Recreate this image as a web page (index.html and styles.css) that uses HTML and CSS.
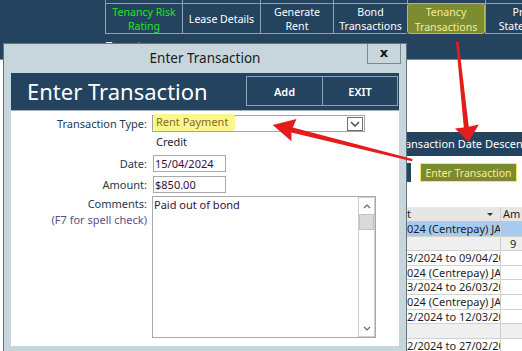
FILE: index.html
```html
<!DOCTYPE html>
<html lang="en">
<head>
<meta charset="utf-8">
<title>Enter Transaction</title>
<link rel="stylesheet" href="styles.css">
</head>
<body>
<header class="topband">
  <div class="navgrid navtop">
    <div class="cell blank"></div>
    <div class="cell"></div>
    <div class="cell"></div>
    <div class="cell"></div>
    <div class="cell"></div>
    <div class="cell"></div>
    <div class="cell"></div>
  </div>
  <nav class="navgrid navmain">
    <div class="cell blank"></div>
    <div class="cell green">Tenancy Risk<br>Rating</div>
    <div class="cell">Lease Details</div>
    <div class="cell">Generate<br>Rent</div>
    <div class="cell">Bond<br>Transactions</div>
    <div class="cell active">Tenancy<br>Transactions</div>
    <div class="cell">Print<br>Statement</div>
  </nav>
  <div class="subline">Tenant</div>
</header>

<main class="main">
  <div class="leftcol"></div>
  <section class="rightcol">
    <div class="sortbar">Transaction Date Descending</div>
    <div class="btnrow">
      <span class="navybtn"></span>
      <span class="enterbtn">Enter Transaction</span>
    </div>
    <div class="table">
      <div class="tr th"><div class="c1">t<span class="sorttri"></span></div><div class="c2">Am</div></div>
      <div class="tr sel"><div class="c1">024 (Centrepay) JA</div><div class="c2"></div></div>
      <div class="tr grey"><div class="c1"></div><div class="c2 amt">9</div></div>
      <div class="tr"><div class="c1">3/2024 to 09/04/2024</div><div class="c2"></div></div>
      <div class="tr"><div class="c1">024 (Centrepay) JA</div><div class="c2"></div></div>
      <div class="tr"><div class="c1">3/2024 to 26/03/2024</div><div class="c2"></div></div>
      <div class="tr"><div class="c1">024 (Centrepay) JA</div><div class="c2"></div></div>
      <div class="tr"><div class="c1">2/2024 to 12/03/2024</div><div class="c2"></div></div>
      <div class="tr grey"><div class="c1"></div><div class="c2"></div></div>
      <div class="tr"><div class="c1">2/2024 to 27/02/2024</div><div class="c2"></div></div>
    </div>
  </section>
</main>

<div class="dialog">
  <div class="titlebar">
    <h1 class="dlg-title">Enter Transaction</h1>
    <div class="close">x</div>
  </div>
  <div class="client">
    <div class="dlg-head">
      <h2 class="head-title">Enter Transaction</h2>
      <div class="head-btns">
        <span class="hbtn">Add</span>
        <span class="hbtn exit">EXIT</span>
      </div>
    </div>
    <div class="frow r-type">
      <label class="lbl">Transaction Type:</label>
      <div class="combo">
        <span class="hl">Rent Payment</span>
        <span class="ddbtn"><svg width="10" height="6" viewBox="0 0 10 6"><polyline points="1,1 5,5 9,1" fill="none" stroke="#555" stroke-width="1.6"/></svg></span>
      </div>
    </div>
    <div class="frow r-credit">
      <span></span>
      <span class="credit">Credit</span>
    </div>
    <div class="frow r-date">
      <label class="lbl">Date:</label>
      <div class="inp">15/04/2024</div>
    </div>
    <div class="frow r-amt">
      <label class="lbl">Amount:</label>
      <div class="inp">$850.00</div>
    </div>
    <div class="frow r-com">
      <div class="lbl lblstack"><span>Comments:</span><span class="hint">(F7 for spell check)</span></div>
      <div class="memo">
        <div class="memotext">Paid out of bond</div>
        <div class="sb">
          <div class="sbbtn up"><svg width="8" height="5" viewBox="0 0 8 5"><polyline points="1,4 4,1 7,4" fill="none" stroke="#666" stroke-width="1.2"/></svg></div>
          <div class="thumb"></div>
          <div class="track"></div>
          <div class="sbbtn down"><svg width="8" height="5" viewBox="0 0 8 5"><polyline points="1,1 4,4 7,1" fill="none" stroke="#666" stroke-width="1.2"/></svg></div>
        </div>
      </div>
    </div>
  </div>
</div>

<svg class="arrows" width="522" height="351" viewBox="0 0 522 351">
  <polygon points="456,42 458.6,42 468.8,126.8 478.8,124.4 468.6,142 455,128.6 463.8,127.4" fill="#e31c1c"/>
  <polygon points="272.7,125 296.5,119 292.8,127.6 412.5,158.9 412,161.3 291.4,132.6 291.5,141.2" fill="#e31c1c"/>
</svg>
</body>
</html>
```

FILE: styles.css
```css
html, body {
  margin: 0;
  padding: 0;
}
body {
  width: 522px;
  height: 351px;
  overflow: hidden;
  position: relative;
  background: #ffffff;
  font-family: "Noto Sans", "Open Sans", sans-serif;
  color: #222;
}

/* ---------- top band ---------- */
.topband {
  background: #24435f;
  height: 59px;
  border-bottom: 1px solid #7d8c9a;
  overflow: hidden;
}
.navgrid {
  display: grid;
  grid-template-columns: 105px 77px 78px 73px 74px 78px 78px;
}
.navgrid .cell {
  box-sizing: border-box;
  border-left: 1px solid #8aa1b6;
  border-bottom: 1px solid #8aa1b6;
}
.navgrid .cell.blank {
  border: none;
}
.navtop .cell {
  height: 4px;
}
.navmain .cell {
  height: 30px;
  display: flex;
  align-items: center;
  justify-content: center;
  text-align: center;
  color: #ffffff;
  font-size: 10.6px;
  line-height: 14.5px;
  padding-top: 1px;
  white-space: nowrap;
}
.navmain .cell.green {
  color: #22e322;
}
.navmain .cell.active {
  background: #7d8c31;
  border: 1px solid #b2be56;
  border-radius: 3px;
  height: 31px;
  margin-top: -1px;
  padding-top: 2px;
  color: #f2ef9c;
}
.subline {
  color: #fff;
  font-size: 11px;
  line-height: 13px;
  padding-left: 106px;
  margin-top: 5px;
}

/* ---------- page behind ---------- */
.main {
  display: flex;
}
.leftcol {
  width: 380px;
  flex: none;
}
.rightcol {
  flex: 1;
  min-width: 0;
}
.sortbar {
  margin-top: 72px;
  height: 24px;
  line-height: 24px;
  background: #24435f;
  color: #ffffff;
  font-size: 11px;
  padding-left: 15px;
  white-space: nowrap;
  overflow: hidden;
}
.btnrow {
  margin-top: 7px;
  height: 19px;
  display: flex;
  gap: 9px;
}
.navybtn {
  width: 31px;
  background: #24435f;
}
.enterbtn {
  box-sizing: border-box;
  width: 97px;
  height: 19px;
  background: #7c8b30;
  border: 1px solid #ecec5e;
  color: #f4f290;
  font-size: 10.5px;
  display: flex;
  align-items: center;
  justify-content: center;
  white-space: nowrap;
}
.table {
  margin-top: 25px;
  margin-left: 26px;
  font-size: 11px;
  color: #1e1e1e;
}
.tr {
  display: grid;
  grid-template-columns: 95px 1fr;
  height: 14.6px;
  box-sizing: border-box;
  border-bottom: 1px solid #d2d2d2;
}
.tr .c1, .tr .c2 {
  white-space: nowrap;
  overflow: hidden;
  line-height: 13.6px;
}
.tr .c1 {
  border-right: 1px solid #cfcfcf;
  padding-left: 1px;
}
.tr .c2 {
  padding-left: 2px;
}
.tr.th {
  height: 15px;
  background: #e6e6e6;
  border-bottom: 1px solid #c4c4c4;
}
.tr.th .c1 {
  display: flex;
  justify-content: space-between;
  align-items: center;
  padding-right: 7px;
  line-height: 14px;
}
.sorttri {
  width: 0;
  height: 0;
  border-left: 3px solid transparent;
  border-right: 3px solid transparent;
  border-top: 3px solid #333;
}
.tr.sel {
  background: #a7cbef;
}
.tr.grey {
  background: #efefef;
}
.c2.amt {
  padding-left: 9px;
}

/* ---------- dialog ---------- */
.dialog {
  position: absolute;
  left: 3px;
  top: 43px;
  width: 404px;
  height: 320px;
  box-sizing: border-box;
  border: 1px solid #66737e;
  background: #c6d6dc;
  display: flex;
  flex-direction: column;
}
.titlebar {
  height: 29px;
  display: grid;
  grid-template-columns: 1fr auto 1fr;
  align-items: start;
}
.dlg-title {
  grid-column: 2;
  margin: 0;
  font-size: 13.5px;
  font-weight: normal;
  color: #1a1a1a;
  line-height: 29px;
  white-space: nowrap;
}
.close {
  grid-column: 3;
  justify-self: end;
  box-sizing: border-box;
  width: 34px;
  height: 20px;
  margin-right: 5px;
  border: 1px solid #7a8993;
  border-top: none;
  font-family: "DejaVu Sans", sans-serif;
  font-weight: bold;
  font-size: 13px;
  color: #111;
  display: flex;
  align-items: center;
  justify-content: center;
  padding-bottom: 2px;
}
.client {
  margin: 0 7px;
  background: #ffffff;
  height: 273px;
  display: flex;
  flex-direction: column;
}
.dlg-head {
  height: 38px;
  box-sizing: border-box;
  background: #24435f;
  border-bottom: 1px solid #a3b2bd;
  display: flex;
  justify-content: space-between;
  align-items: flex-start;
}
.head-title {
  margin: 0;
  padding-left: 16px;
  font-size: 22px;
  font-weight: normal;
  color: #ffffff;
  line-height: 37px;
  white-space: nowrap;
}
.head-btns {
  display: flex;
  margin-top: 3px;
  margin-right: 1px;
}
.hbtn {
  box-sizing: border-box;
  width: 77px;
  height: 30px;
  border: 1px solid #8aa1b6;
  color: #ffffff;
  font-size: 11px;
  font-weight: 600;
  display: flex;
  align-items: center;
  justify-content: center;
}
.hbtn.exit {
  width: 75px;
  border-left: none;
}

/* form rows */
.frow {
  display: grid;
  grid-template-columns: 136px auto;
  column-gap: 5px;
  align-items: center;
  justify-content: start;
}
.lbl {
  text-align: right;
  font-size: 11px;
  color: #213a55;
  white-space: nowrap;
}
.r-type {
  margin-top: 4px;
  height: 17px;
}
.combo {
  box-sizing: border-box;
  width: 213px;
  height: 17px;
  border: 1px solid #a3a3a3;
  display: flex;
  align-items: center;
  justify-content: space-between;
}
.hl {
  position: relative;
  margin-left: 0;
  margin-top: -3px;
  height: 17px;
  width: 82px;
  box-sizing: border-box;
  padding-left: 3px;
  background: #fbf78a;
  border-radius: 4px;
  color: #86692a;
  font-size: 11px;
  line-height: 16px;
  white-space: nowrap;
}
.ddbtn {
  box-sizing: border-box;
  width: 16px;
  height: 14px;
  margin-right: 1px;
  border: 1px solid #6f6f6f;
  display: flex;
  align-items: center;
  justify-content: center;
}
.r-credit {
  height: 18px;
}
.credit {
  padding-left: 4px;
  font-size: 11px;
  color: #1c2538;
}
.r-date {
  margin-top: 5px;
}
.r-amt {
  margin-top: 4px;
}
.inp {
  box-sizing: border-box;
  width: 73px;
  height: 17px;
  margin-left: 1px;
  border: 1px solid #a9a9a9;
  padding-left: 1px;
  font-size: 11px;
  line-height: 15px;
  color: #35103e;
  white-space: nowrap;
}
.r-com {
  margin-top: 3px;
  align-items: start;
}
.lblstack {
  display: flex;
  flex-direction: column;
  align-items: flex-end;
  line-height: 15.5px;
}
.hint {
  color: #5b5080;
}
.memo {
  box-sizing: border-box;
  width: 224px;
  height: 142px;
  border: 1px solid #a9a9a9;
  display: flex;
}
.memotext {
  flex: 1;
  padding-left: 1px;
  font-size: 11px;
  line-height: 15px;
  color: #35103e;
}
.sb {
  width: 17px;
  box-sizing: border-box;
  border: 1px solid #cfcfcf;
  display: flex;
  flex-direction: column;
}
.sbbtn {
  height: 16px;
  flex: none;
  display: flex;
  align-items: center;
  justify-content: center;
}
.thumb {
  height: 16px;
  flex: none;
  box-sizing: border-box;
  background: #dadada;
  border: 1px solid #c2c2c2;
}
.track {
  flex: 1;
}

/* annotation arrows */
.arrows {
  position: absolute;
  left: 0;
  top: 0;
  pointer-events: none;
}
```
